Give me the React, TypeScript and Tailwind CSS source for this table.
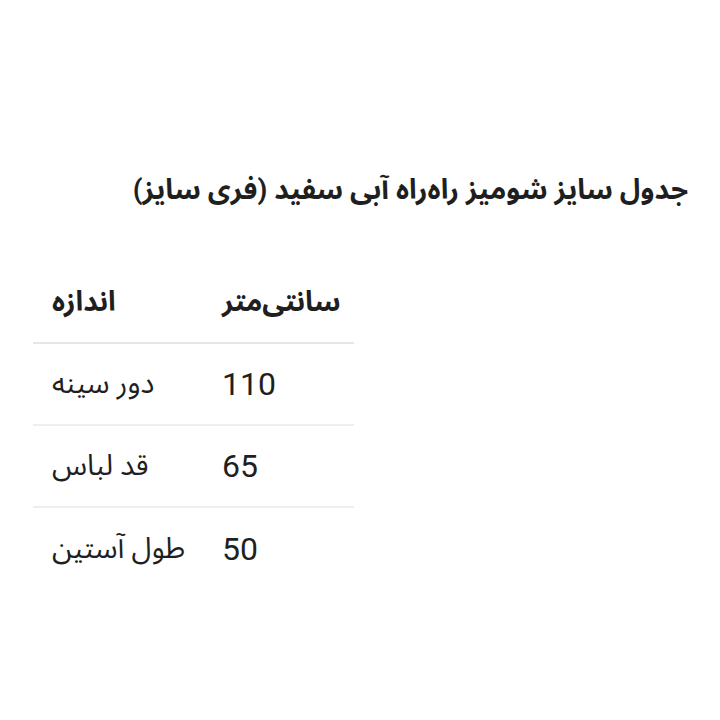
import React from "react";

const rows = [
  ["دور سینه", "110"],
  ["قد لباس", "65"],
  ["طول آستین", "50"],
];

export default function App() {
  return (
    <div
      className="w-[720px] h-[720px] bg-white text-[#1f1f1f]"
      style={{ fontFamily: "Roboto, 'Noto Sans Arabic', sans-serif" }}
    >
      <div className="pt-[166px] pr-[32px] flex justify-end">
        <h1 dir="rtl" className="text-[28px] leading-[48px] font-bold">
          جدول سایز شومیز راه‌راه آبی سفید (فری سایز)
        </h1>
      </div>
      <div className="mt-[48px] ml-[33px] w-[321px]">
        <div className="grid grid-cols-[169px_152px] h-[82px] items-center border-b-2 border-[#e6e6e6]">
          <div className="pl-[19px] text-[28px] font-bold">
            <span dir="rtl">اندازه</span>
          </div>
          <div className="pl-[20px] text-[28px] font-bold">
            <span dir="rtl">سانتی‌متر</span>
          </div>
        </div>
        {rows.map((r, i) => (
          <div
            key={i}
            className={
              "grid grid-cols-[169px_152px] h-[82px] items-center " +
              (i < rows.length - 1 ? "border-b-2 border-[#eeeeee]" : "")
            }
          >
            <div className="pl-[19px] text-[29px]">
              <span dir="rtl">{r[0]}</span>
            </div>
            <div className="pl-[20px] text-[32px]">{r[1]}</div>
          </div>
        ))}
      </div>
    </div>
  );
}
